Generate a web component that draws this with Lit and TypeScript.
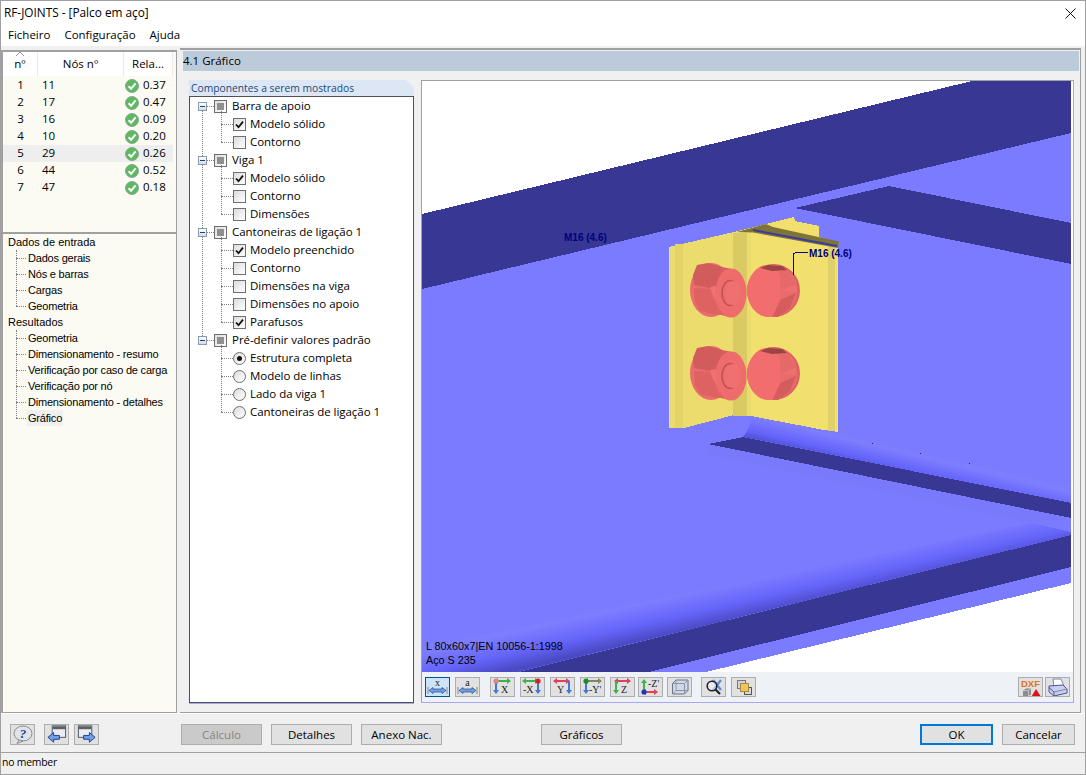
import { LitElement, html, css, svg, nothing } from "lit";
import { customElement } from "lit/decorators.js";

const UI_FONT = css`"Open Sans", "Noto Sans", sans-serif`;

const NODES = [
  { n: 1, node: 11, ratio: "0.37" },
  { n: 2, node: 17, ratio: "0.47" },
  { n: 3, node: 16, ratio: "0.09" },
  { n: 4, node: 10, ratio: "0.20" },
  { n: 5, node: 29, ratio: "0.26", hot: true },
  { n: 6, node: 44, ratio: "0.52" },
  { n: 7, node: 47, ratio: "0.18" },
];

const NAV = [
  { label: "Dados de entrada", kids: ["Dados gerais", "Nós e barras", "Cargas", "Geometria"] },
  {
    label: "Resultados",
    kids: [
      "Geometria",
      "Dimensionamento - resumo",
      "Verificação por caso de carga",
      "Verificação por nó",
      "Dimensionamento - detalhes",
      "Gráfico",
    ],
  },
];

const COMPONENTS = [
  { label: "Barra de apoio", kids: [{ t: "Modelo sólido", on: true }, { t: "Contorno" }] },
  { label: "Viga 1", kids: [{ t: "Modelo sólido", on: true }, { t: "Contorno" }, { t: "Dimensões" }] },
  {
    label: "Cantoneiras de ligação 1",
    kids: [
      { t: "Modelo preenchido", on: true },
      { t: "Contorno" },
      { t: "Dimensões na viga" },
      { t: "Dimensões no apoio" },
      { t: "Parafusos", on: true },
    ],
  },
  {
    label: "Pré-definir valores padrão",
    radio: true,
    kids: [
      { t: "Estrutura completa", on: true },
      { t: "Modelo de linhas" },
      { t: "Lado da viga 1" },
      { t: "Cantoneiras de ligação 1" },
    ],
  },
];

const okIcon = html`<svg width="14" height="14" viewBox="0 0 14 14">
  <circle cx="7" cy="7" r="6.5" fill="#5cb960" stroke="#8fa596" />
  <path d="M3.6 7.2 6.1 9.8 10.6 4.4" fill="none" stroke="#fff" stroke-width="2" />
</svg>`;

const checkMark = html`<svg width="11" height="11" viewBox="0 0 11 11">
  <path d="M2 5.5 4.5 8.2 9 2.6" fill="none" stroke="#111" stroke-width="1.8" />
</svg>`;

// one view-direction button: two arrows meeting at a corner plus the axis letter
function axisIcon(o: {
  hx: number[];
  hy: number;
  hc: string;
  vx: number;
  vy: number[];
  vc: string;
  t: string;
  tx: number;
  ty: number;
  dot?: string;
}) {
  const [x1, x2] = o.hx;
  const [y1, y2] = o.vy;
  const vDir = y2 > y1 ? 1 : -1;
  return html`<svg width="23" height="18" viewBox="0 0 23 18">
    <path d="M${x1} ${o.hy}H${x2}" stroke=${o.hc} stroke-width="2" fill="none" />
    <path d="M${x2 - 3} ${o.hy - 3}L${x2 + 1} ${o.hy}L${x2 - 3} ${o.hy + 3}Z" fill=${o.hc} />
    <path d="M${x1 + 2} ${o.hy - 3}L${x1 - 2} ${o.hy}L${x1 + 2} ${o.hy + 3}Z" fill=${o.hc} />
    <path d="M${o.vx} ${y1}V${y2}" stroke=${o.vc} stroke-width="2" fill="none" />
    <path d="M${o.vx - 3} ${y2 - 3 * vDir}L${o.vx} ${y2 + vDir}L${o.vx + 3} ${y2 - 3 * vDir}Z" fill=${o.vc} />
    ${o.dot ? svg`<circle cx=${o.vx} cy=${o.hy} r="2.6" fill=${o.dot} />` : nothing}
    <text x=${o.tx} y=${o.ty} font-family="Liberation Serif, serif" font-size="10" fill="#222">${o.t}</text>
  </svg>`;
}

function spanIcon(letter: string) {
  return html`<svg width="23" height="18" viewBox="0 0 23 18">
    <text x="11.5" y="7.5" text-anchor="middle" font-family="Liberation Serif, serif" font-size="10" fill="#222">${letter}</text>
    <path d="M3 12.5 7 9.5V11H16V9.5L20 12.5 16 15.5V14H7V15.5Z" fill="#6f9fe0" stroke="#34579a" stroke-width=".8" />
    <path d="M2 9V16M21 9V16" stroke="#888" />
  </svg>`;
}

const TOOLS_A = [
  axisIcon({ hx: [5, 19], hy: 3, hc: "#3cb44a", vx: 5, vy: [3, 15], vc: "#3f78d8", t: "X", tx: 10, ty: 15, dot: "#e8808a" }),
  axisIcon({ hx: [3, 17], hy: 3, hc: "#3cb44a", vx: 17, vy: [3, 15], vc: "#3f78d8", t: "-X", tx: 2, ty: 15, dot: "#d8202a" }),
  axisIcon({ hx: [4, 18], hy: 3, hc: "#e0405a", vx: 18, vy: [3, 15], vc: "#3f78d8", t: "Y", tx: 6, ty: 15 }),
  axisIcon({ hx: [5, 20], hy: 3, hc: "#808860", vx: 5, vy: [3, 15], vc: "#3f78d8", t: "-Y'", tx: 8, ty: 15, dot: "#1f8a2c" }),
  axisIcon({ hx: [5, 19], hy: 3, hc: "#e0405a", vx: 5, vy: [3, 15], vc: "#3cb44a", t: "Z", tx: 10, ty: 15 }),
  axisIcon({ hx: [5, 18], hy: 14, hc: "#e0405a", vx: 5, vy: [14, 2], vc: "#3cb44a", t: "-Z'", tx: 9, ty: 9, dot: "#2030c0" }),
];

const cubeIcon = html`<svg width="20" height="18" viewBox="0 0 20 18">
  <path d="M2.500 5.500 6 2H18V12.500L14.500 16H2.500Z" fill="#d2d9e6" stroke="#6c7588" />
  <path d="M2.500 5.500H14.500V16M14.500 5.500 18 2M6 2V12.500H18M6 12.500 2.500 16" fill="none" stroke="#8a94a8" />
</svg>`;

const zoomIcon = html`<svg width="20" height="18" viewBox="0 0 20 18">
  <path d="M9 2 17 12M17 2 9 12" stroke="#5f8fdc" stroke-width="2.400" />
  <circle cx="8" cy="8" r="4.800" fill="#eef2f8" fill-opacity=".6" stroke="#222" stroke-width="1.600" />
  <path d="M11.500 11.500 16 16" stroke="#222" stroke-width="2.200" />
</svg>`;

const layersIcon = html`<svg width="20" height="18" viewBox="0 0 20 18">
  <rect x="3.500" y="2.500" width="8" height="8" fill="#d0d3d8" stroke="#777" />
  <rect x="10.500" y="9.500" width="7" height="7" fill="#d4d8dd" stroke="#555" />
  <rect x="6.500" y="5.500" width="8" height="8" fill="#f2c55c" stroke="#a58a40" />
</svg>`;

const dxfIcon = html`<svg width="23" height="19" viewBox="0 0 23 19">
  <text x="11.500" y="8.500" text-anchor="middle" font-family="Liberation Sans, sans-serif" font-weight="700" font-size="9.500" fill="#e07020">DXF</text>
  <path d="M4 12.500 7 10.500H12V16.500L9.500 18H4Z" fill="#8c8c8c" />
  <path d="M4 12.500H9.500V18M9.500 12.500 12 10.500" fill="none" stroke="#cfcfcf" stroke-width=".8" />
  <path d="M17 11 21.500 18H12.800Z" fill="#e01020" />
</svg>`;

const printIcon = html`<svg width="23" height="19" viewBox="0 0 23 19">
  <path d="M7 1 15 1 18 8 8 9Z" fill="#fff" stroke="#7f86b0" />
  <path d="M3 8 17 7 21 11V15L8 18 3 14Z" fill="#c9cdf0" stroke="#4c5590" />
  <path d="M3 9.500 8 14V18" fill="none" stroke="#4c5590" />
  <path d="M8 14 21 11" stroke="#7f86b0" />
</svg>`;

const helpIcon = html`<svg width="22" height="19" viewBox="0 0 22 19">
  <ellipse cx="11" cy="8.500" rx="9" ry="7.500" fill="#dfe3ea" stroke="#8c8c8c" />
  <path d="M7 15 5 18.500 11 16Z" fill="#dfe3ea" stroke="#8c8c8c" />
  <text x="11" y="13" text-anchor="middle" font-family="Liberation Serif, serif" font-style="italic" font-weight="700" font-size="13" fill="#23408c">?</text>
</svg>`;

function windowArrow(toRight: boolean) {
  const arrow = toRight
    ? "M9 11.500H15V8.500L21 13.500 15 18.500V15.500H9Z"
    : "M15 11.500H9V8.500L3 13.500 9 18.500V15.500H15Z";
  return html`<svg width="24" height="20" viewBox="0 0 24 20">
    <rect x=${toRight ? 3.5 : 7.5} y="1.500" width="14" height="12" fill="#e9edf3" stroke="#4f5560" />
    <rect x=${toRight ? 4 : 8} y="2" width="13" height="3" fill="#5a6068" />
    <path d=${arrow} fill="#6f9fe8" stroke="#1f3f90" />
  </svg>`;
}

@customElement("joint-scene")
export class JointScene extends LitElement {
  static styles = css`
    :host {
      display: block;
      flex: 1;
      min-height: 0;
      background: #fff;
    }

    svg {
      display: block;
    }
  `;

  // both bolts are the same shape, drawn once and reused for the lower row
  renderBolts() {
    return svg`
      <ellipse cx="711" cy="290" rx="21" ry="27" fill="#ea6c6c" />
      <path d="M697 265 708 263 722 267 720 275 716 286 710 288 694 285 693 275Z" fill="#d25b5b" />
      <path d="M694 288 710 289 721 315 712 314 700 311 695 302Z" fill="#de6262" />
      <path d="M710 287 716 286 716 298 714 298Z" fill="#f07272" />
      <path d="M722 267 737 270 730 317 721 315 716 298 716 286Z" fill="#d85d5d" />
      <ellipse cx="731" cy="293" rx="15.500" ry="24.500" fill="#ee6c6c" />
      <ellipse cx="730" cy="293" rx="8" ry="12.500" fill="#ee6c6c" stroke="#c25252" stroke-width="1.600" />
      <ellipse cx="733" cy="293" rx="7.500" ry="12" fill="#f07070" />

      <ellipse cx="773.500" cy="290.500" rx="26.500" ry="26.500" fill="#dc6262" />
      <ellipse cx="772.500" cy="290.500" rx="25" ry="26" fill="#ea6b6b" />
      <path d="M779 272 787 268 795 285 780 291Z" fill="#e66969" />
      <path d="M780 291 795 285 796 292Z" fill="#f07070" />
      <path d="M780 300 796 293 790 308 778 317 772 316Z" fill="#d45c5c" />
      <path d="M766 265 C757 265 747 277 747 291 C747 305 757 317 768 317 L773 316 780 300 780 277 775 268Z" fill="#f26e6e" />
      <path d="M760 268 768 265 782 266 787 270 772 271Z" fill="#9c4444" />
    `;
  }

  render() {
    return html`<svg width="651" height="591" viewBox="422 81 651 591" shape-rendering="crispEdges">
      <defs>
        <linearGradient id="fillet-low" gradientUnits="userSpaceOnUse" x1="750" y1="580" x2="757.700" y2="614.600">
          <stop offset="0" stop-color="#7d7dff" />
          <stop offset=".55" stop-color="#6565fb" />
          <stop offset="1" stop-color="#4a4ac4" />
        </linearGradient>
        <linearGradient id="fillet-up" gradientUnits="userSpaceOnUse" x1="900" y1="452" x2="894" y2="477">
          <stop offset="0" stop-color="#7d7dff" />
          <stop offset=".55" stop-color="#6464fb" />
          <stop offset="1" stop-color="#4646be" />
        </linearGradient>
        <symbol id="bolt-pair" overflow="visible">${this.renderBolts()}</symbol>
      </defs>

      <rect x="422" y="81" width="651" height="591" fill="#fff" />
      <path d="M422 289 1071 133V583L702 673H422Z" fill="#7b7bff" />
      <path d="M422 214 972 81H1071V133L422 289Z" fill="#383894" />
      <path d="M795 208 889 186 1071 223V264Z" fill="#383894" />

      <path d="M708 454 708 444 1071 518 1032 523Z" fill="#7979fc" />

      <path d="M751 416 1071 487V503L743 437C748 431 751 424 751 416Z" fill="url(#fillet-up)" shape-rendering="auto" />
      <path d="M708 444 743 437 1071 503V518Z" fill="#383894" />

      <path d="M1032 523 1071 532V535L518 672H422V647Z" fill="url(#fillet-low)" shape-rendering="auto" />
      <path d="M1071 535V567L645 673H515Z" fill="#383894" />
      <path d="M702 673 1071 583V673Z" fill="#fff" />

      <g fill="#22225a">
        <rect x="872" y="443" width="1" height="1" />
        <rect x="920" y="453" width="1" height="1" />
        <rect x="969" y="463" width="1" height="1" />
      </g>

      <path d="M794 217 795 221 819 226V237L838 243V432L824 430 751 416V232L734 232Z" fill="#f2e06e" />
      <path d="M669 247 734 232 751 232V416L734 415 684 428H669Z" fill="#ebdc6d" />
      <rect x="675" y="244" width="8" height="184" fill="#e4d468" />
      <path d="M733 233H747V416H733Z" fill="#d9ca64" />
      <rect x="828" y="241" width="7" height="190" fill="#e0d068" />

      <path d="M737 232 766 224 773 227 839 241.500 838 248 753 232.500Z" fill="#7f7438" shape-rendering="auto" />
      <path d="M753 229 837 245 837 247 753 231Z" fill="#3a3aa0" shape-rendering="auto" />

      <g shape-rendering="auto">
        <use href="#bolt-pair" />
        <use href="#bolt-pair" y="83" />
      </g>

      <path d="M793.500 275V253.500L796 252.500H808" fill="none" stroke="#000080" />
      <g font-family="Liberation Sans, sans-serif" font-size="10" font-weight="700" fill="#000080" shape-rendering="auto">
        <text x="564" y="241">M16 (4.6)</text>
        <text x="809" y="257">M16 (4.6)</text>
      </g>
      <g font-family="Liberation Sans, sans-serif" font-size="10.800" fill="#000" shape-rendering="auto">
        <text x="426" y="650">L 80x60x7|EN 10056-1:1998</text>
        <text x="426" y="664">Aço S 235</text>
      </g>
    </svg>`;
  }
}

@customElement("app-root")
export class AppRoot extends LitElement {
  static styles = css`
    :host {
      display: block;
      width: 1086px;
      height: 775px;
      font-family: ${UI_FONT};
      font-size: 11.5px;
      color: #000;
      --line: #a0a0a0;
    }

    * {
      box-sizing: border-box;
    }

    .window {
      width: 100%;
      height: 100%;
      display: flex;
      flex-direction: column;
      background: #f0f0f0;
      border: 1px solid var(--line);
      overflow: hidden;
    }

    .titlebar {
      height: 24px;
      flex: none;
      display: flex;
      align-items: center;
      justify-content: space-between;
      padding: 0 9px 0 3px;
      background: #fff;
      font-size: 11.8px;
    }

    .titlebar span {
      padding-bottom: 2px;
    }

    .menubar {
      height: 21px;
      flex: none;
      display: flex;
      align-items: center;
      gap: 14px;
      padding: 0 0 2px 7px;
      background: #fff;
      font-size: 11.5px;
    }

    .body {
      flex: 1;
      min-height: 0;
      display: flex;
      gap: 3px;
      padding: 2px 4px 0 0;
    }

    .sidebar {
      width: 176px;
      flex: none;
      display: flex;
      flex-direction: column;
      background: #fbfbf3;
      border-top: 2px solid var(--line);
      border-left: 2px solid var(--line);
      border-right: 1px solid var(--line);
      border-bottom: 1px solid var(--line);
      margin-top: 2px;
    }

    .table-pane {
      height: 182px;
      flex: none;
      border-bottom: 2px solid var(--line);
    }

    .thead,
    .trow {
      display: grid;
      grid-template-columns: 35px 86px 49px;
      width: 170px;
    }

    .thead {
      height: 24px;
      background: #fff;
      align-items: center;
      text-align: center;
    }

    .thead div {
      height: 100%;
      display: flex;
      align-items: center;
      justify-content: center;
      padding-bottom: 2px;
      border-right: 1px solid #e9e9e9;
      position: relative;
    }

    .sort {
      position: absolute;
      top: 0;
      left: 13px;
      width: 8px;
      height: 4px;
    }

    .rows {
      padding-top: 1px;
    }

    .trow {
      height: 17px;
      align-items: center;
    }

    .trow.hot {
      background: #eeeeee;
    }

    .trow .idx {
      text-align: center;
      padding-bottom: 2px;
    }

    .trow .node {
      padding: 0 0 2px 4px;
    }

    .trow .ratio {
      display: flex;
      align-items: center;
      gap: 4px;
      padding-left: 1px;
    }

    .trow .ratio span {
      padding-bottom: 2px;
    }

    .nav {
      flex: 1;
      font-family: "Liberation Sans", sans-serif;
      font-size: 11px;
      white-space: nowrap;
    }

    .nav-group {
      position: relative;
    }

    .nav-head,
    .nav-kid {
      height: 16px;
      display: flex;
      align-items: center;
      position: relative;
    }

    .nav-head {
      padding-left: 5px;
    }

    .nav-kid {
      padding-left: 24px;
      letter-spacing: -0.2px;
    }

    .nav-kid::before {
      content: "";
      position: absolute;
      left: 13px;
      width: 10px;
      top: 8px;
      border-top: 1px dotted #808080;
    }

    .nav-group::before {
      content: "";
      position: absolute;
      left: 13px;
      top: 16px;
      bottom: 8px;
      border-left: 1px dotted #808080;
    }

    .nav-kid span {
      padding: 0 1px;
      line-height: 16px;
    }

    .nav-kid.picked span {
      background: #f0f0f0;
    }

    .content {
      flex: 1;
      min-width: 0;
      display: flex;
      flex-direction: column;
      border-top: 2px solid var(--line);
      border-right: 1px solid var(--line);
      border-bottom: 1px solid var(--line);
      padding: 1px 1px 9px 3px;
    }

    .heading {
      height: 20px;
      flex: none;
      display: flex;
      align-items: center;
      padding-bottom: 2px;
      background: #bccbd9;
      font-size: 11.5px;
    }

    .workspace {
      flex: 1;
      min-height: 0;
      display: flex;
      gap: 7px;
      padding: 9px 5px 0 6px;
    }

    .components {
      width: 225px;
      flex: none;
      display: flex;
      flex-direction: column;
    }

    .tab {
      height: 16px;
      flex: none;
      padding-left: 2px;
      display: flex;
      align-items: center;
      background: #dce6f4;
      color: #1b4a78;
      font-size: 10.3px;
      clip-path: polygon(0 0, calc(100% - 8px) 0, 100% 8px, 100% 100%, 0 100%);
    }

    .tree {
      flex: 1;
      background: #fff;
      border: 1px solid #505050;
      box-shadow: 0 1px 0 #a8a8f0;
      letter-spacing: -0.04px;
    }

    .group {
      position: relative;
    }

    .group:not(:last-child)::before {
      content: "";
      position: absolute;
      left: 12px;
      top: 14px;
      bottom: -5px;
      border-left: 1px dotted #808080;
    }

    .row {
      height: 18px;
      display: flex;
      align-items: center;
      position: relative;
    }

    .expander {
      width: 9px;
      height: 9px;
      margin-left: 8px;
      flex: none;
      border: 1px solid #8a99ad;
      background: linear-gradient(#fff, #d5dce6);
      display: flex;
      align-items: center;
      justify-content: center;
      position: relative;
      z-index: 1;
    }

    .expander::after {
      content: "";
      width: 5px;
      height: 1px;
      background: #1f3f80;
    }

    .stub {
      width: 7px;
      flex: none;
      border-top: 1px dotted #808080;
    }

    .box {
      width: 13px;
      height: 13px;
      flex: none;
      border: 1px solid #6f6f6f;
      background: linear-gradient(135deg, #dcdcdc, #fff);
      display: flex;
      align-items: center;
      justify-content: center;
    }

    .box.mixed::after {
      content: "";
      width: 7px;
      height: 7px;
      background: #8f8f8f;
    }

    .box.radio {
      border-radius: 50%;
    }

    .box.radio.on::after {
      content: "";
      width: 5px;
      height: 5px;
      border-radius: 50%;
      background: #111;
    }

    .row .text {
      margin-left: 5px;
      padding-bottom: 2px;
      white-space: nowrap;
    }

    .kid {
      padding-left: 43px;
    }

    .kid .text {
      margin-left: 4px;
    }

    .kid::before {
      content: "";
      position: absolute;
      left: 31px;
      width: 12px;
      top: 9px;
      border-top: 1px dotted #808080;
    }

    .kids {
      position: relative;
    }

    .kids::before {
      content: "";
      position: absolute;
      left: 31px;
      top: -4px;
      bottom: 9px;
      border-left: 1px dotted #808080;
    }

    .viewer {
      flex: 1;
      min-width: 0;
      display: flex;
      flex-direction: column;
      border-top: 1px solid var(--line);
      border-left: 1px solid var(--line);
      border-right: 1px solid #a8a8f0;
      border-bottom: 1px solid #a8a8f0;
      background: #fff;
    }

    .toolbar {
      height: 30px;
      flex: none;
      display: flex;
      align-items: center;
      background: #eef2f7;
      padding: 0 3px 0 3px;
    }

    .tool {
      width: 25px;
      height: 20px;
      flex: none;
      margin-left: 5px;
      display: flex;
      align-items: center;
      justify-content: center;
      background: #e1e1e1;
      border: 1px solid #adadad;
      overflow: hidden;
    }

    .tool:first-child {
      margin-left: 0;
    }

    .tool.active {
      background: #cce4f7;
      border-color: #005499;
    }

    .tool.gap {
      margin-left: 10px;
    }

    .tool.tight {
      margin-left: 3px;
    }

    .tool.cube {
      margin-left: 4px;
    }

    .tool.apart {
      margin-left: 9px;
    }

    .tool.push {
      margin-left: auto;
    }

    .tool.near {
      margin-left: 2px;
    }

    .actions {
      height: 40px;
      flex: none;
      display: flex;
      align-items: center;
      padding: 2px 10px 0 9px;
      border-bottom: 1px solid var(--line);
      border-top: 1px solid #fff;
    }

    .btn {
      width: 81px;
      height: 21px;
      flex: none;
      margin-left: 9px;
      display: flex;
      align-items: center;
      justify-content: center;
      background: #e1e1e1;
      border: 1px solid #adadad;
    }

    .btn.off {
      margin-left: 82px;
      background: #cacaca;
      color: #858585;
    }

    .btn.far {
      margin-left: 99px;
    }

    .btn.ok {
      width: 73px;
      margin-left: auto;
      border: 2px solid #0078d7;
    }

    .btn.cancel {
      width: 73px;
    }

    .icon-btn {
      width: 25px;
      height: 21px;
      flex: none;
      margin-right: 9px;
      display: flex;
      align-items: center;
      justify-content: center;
      background: #e1e1e1;
      border: 1px solid #adadad;
      overflow: hidden;
    }

    .icon-btn + .icon-btn + .icon-btn {
      margin-left: -4px;
      margin-right: 0;
    }

    .status {
      height: 20px;
      flex: none;
      display: flex;
      align-items: center;
      padding: 0 0 2px 1px;
      font-size: 10.4px;
      letter-spacing: -0.2px;
      margin-bottom: 1px;
    }
  `;

  renderTable() {
    return html`<div class="table-pane">
      <div class="thead">
        <div>
          <svg class="sort" viewBox="0 0 8 4"><path d="M0 4 4 0 8 4" fill="none" stroke="#999" /></svg>
          nº
        </div>
        <div>Nós nº</div>
        <div>Rela...</div>
      </div>
      <div class="rows">
        ${NODES.map(
          (r) => html`<div class="trow ${r.hot ? "hot" : ""}">
            <div class="idx">${r.n}</div>
            <div class="node">${r.node}</div>
            <div class="ratio">${okIcon}<span>${r.ratio}</span></div>
          </div>`
        )}
      </div>
    </div>`;
  }

  renderNav() {
    return html`<div class="nav">
      ${NAV.map(
        (g) => html`<div class="nav-group">
          <div class="nav-head">${g.label}</div>
          ${g.kids.map(
            (k) => html`<div class="nav-kid ${k === "Gráfico" ? "picked" : ""}"><span>${k}</span></div>`
          )}
        </div>`
      )}
    </div>`;
  }

  renderComponents() {
    return html`<div class="components">
      <div class="tab">Componentes a serem mostrados</div>
      <div class="tree">
        ${COMPONENTS.map(
          (g) => html`<div class="group">
            <div class="row">
              <span class="expander"></span><span class="stub"></span>
              <span class="box mixed"></span><span class="text">${g.label}</span>
            </div>
            <div class="kids">
              ${g.kids.map(
                (k) => html`<div class="row kid">
                  ${g.radio
                    ? html`<span class="box radio ${k.on ? "on" : ""}"></span>`
                    : html`<span class="box">${k.on ? checkMark : nothing}</span>`}
                  <span class="text">${k.t}</span>
                </div>`
              )}
            </div>
          </div>`
        )}
      </div>
    </div>`;
  }

  renderToolbar() {
    return html`<div class="toolbar">
      <span class="tool active">${spanIcon("x")}</span>
      <span class="tool">${spanIcon("a")}</span>
      ${TOOLS_A.map(
        (icon, i) => html`<span class="tool ${i === 0 ? "gap" : i === 5 ? "tight" : ""}">${icon}</span>`
      )}
      <span class="tool cube">${cubeIcon}</span>
      <span class="tool apart">${zoomIcon}</span>
      <span class="tool">${layersIcon}</span>
      <span class="tool push">${dxfIcon}</span>
      <span class="tool near">${printIcon}</span>
    </div>`;
  }

  render() {
    return html`<div class="window">
      <div class="titlebar">
        <span>RF-JOINTS - [Palco em aço]</span>
        <svg width="11" height="11" viewBox="0 0 11 11">
          <path d="M.5 .5 10.500 10.500M10.500 .5 .5 10.500" stroke="#111" />
        </svg>
      </div>
      <div class="menubar">
        <span>Ficheiro</span><span>Configuração</span><span>Ajuda</span>
      </div>
      <div class="body">
        <div class="sidebar">${this.renderTable()}${this.renderNav()}</div>
        <div class="content">
          <div class="heading">4.1 Gráfico</div>
          <div class="workspace">
            ${this.renderComponents()}
            <div class="viewer"><joint-scene></joint-scene>${this.renderToolbar()}</div>
          </div>
        </div>
      </div>
      <div class="actions">
        <span class="icon-btn">${helpIcon}</span>
        <span class="icon-btn">${windowArrow(false)}</span>
        <span class="icon-btn">${windowArrow(true)}</span>
        <span class="btn off">Cálculo</span>
        <span class="btn">Detalhes</span>
        <span class="btn">Anexo Nac.</span>
        <span class="btn far">Gráficos</span>
        <span class="btn ok">OK</span>
        <span class="btn cancel">Cancelar</span>
      </div>
      <div class="status">no member</div>
    </div>`;
  }
}
